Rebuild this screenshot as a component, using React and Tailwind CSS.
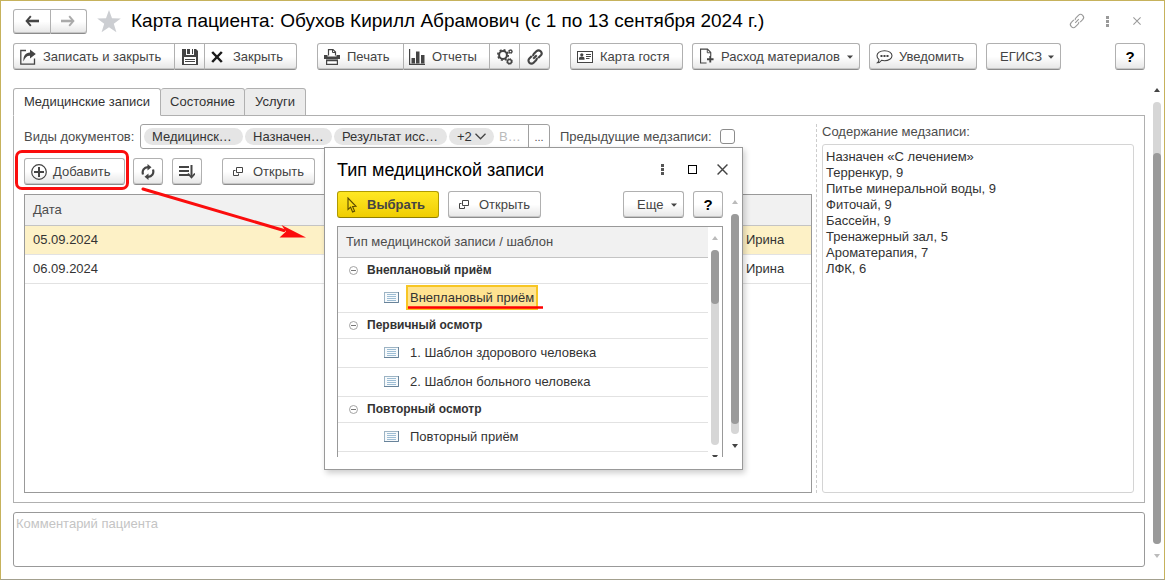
import React from 'react';

const BTN =
  'flex shrink-0 items-center border border-[#b0b0b0] border-b-[#8c8c8c] bg-linear-to-b from-white from-50% to-[#e6e6e6] shadow-[inset_0_-1px_0_#c6c6c6] text-[#444] whitespace-nowrap';

function Button({ className = '', children, ...rest }) {
  return (
    <button type="button" className={`${BTN} h-[27px] ${className}`} {...rest}>
      {children}
    </button>
  );
}

function Caret() {
  return (
    <svg width="6" height="4" viewBox="0 0 6 4" className="ml-auto shrink-0" aria-hidden="true">
      <path d="M0 0.500h6L3 3.800z" fill="#444" />
    </svg>
  );
}

function BackArrow({ flip, color }) {
  return (
    <svg width="14" height="12" viewBox="0 0 14 12" className={flip ? 'rotate-180' : ''} aria-hidden="true">
      <path d="M5.800 1.200L1.600 6l4.200 4.800" fill="none" stroke={color} strokeWidth="1.900" />
      <path d="M2 6h12" stroke={color} strokeWidth="2.600" />
    </svg>
  );
}

function StarIcon() {
  return (
    <svg width="24" height="23" viewBox="0 0 24 23" aria-hidden="true">
      <path d="M12 0l3 8.200 8.800.3-7 5.300 2.600 8.500L12 17.300 4.600 22.300l2.600-8.500-7-5.300L9 8.200z" fill="#ccced2" />
    </svg>
  );
}

function SaveCloseIcon() {
  return (
    <svg width="16" height="16" viewBox="0 0 16 16" aria-hidden="true">
      <path d="M6 1.500H0.800V15.200H14.500V9.500" fill="none" stroke="#444" strokeWidth="1.300" />
      <path d="M3.500 12.500C3 7 5.500 3.500 10 3.500V0.500L15.800 5 10 9.500V6.700C7 6.500 5 8.500 3.500 12.500z" fill="#444" />
    </svg>
  );
}

function FloppyIcon() {
  return (
    <svg width="16" height="16" viewBox="0 0 16 16" aria-hidden="true">
      <path d="M0 0h14l2 2v14H0z" fill="#444" />
      <path d="M4 0h8v6H4z" fill="#fff" />
      <path d="M5 0h3v5H5zM10 0h1v5h-1z" fill="#444" />
      <path d="M2 8h12v7H2z" fill="#fff" />
      <path d="M3 10.500h10M3 12.500h10" stroke="#444" strokeWidth="1" />
    </svg>
  );
}

function CrossIcon() {
  return (
    <svg width="12" height="12" viewBox="0 0 12 12" aria-hidden="true">
      <path d="M1.200 1l9.600 10M10.800 1L1.200 11" stroke="#1a1a1a" strokeWidth="2.500" />
    </svg>
  );
}

function PrinterIcon() {
  return (
    <svg width="16" height="16" viewBox="0 0 16 16" aria-hidden="true">
      <path d="M4.500 6.500V0.600h4.500l2.500 2.500v3.400" fill="#fff" stroke="#444" strokeWidth="1.200" />
      <path d="M8.500 0.500v3h3" fill="none" stroke="#444" strokeWidth="1" />
      <path d="M0 6h3.500v1.500h9V6H16v4H0z" fill="#444" />
      <path d="M2.600 11h10.800v4.400H2.600z" fill="#fff" stroke="#444" strokeWidth="1.200" />
      <path d="M2 11.500h12" stroke="#444" strokeWidth="1.500" />
    </svg>
  );
}

function ChartIcon() {
  return (
    <svg width="16" height="16" viewBox="0 0 16 16" aria-hidden="true">
      <path d="M0.600 0v15.400H16" fill="none" stroke="#444" strokeWidth="1.200" />
      <path d="M2.500 9H6v5.500H2.500zM7 2.500h3.500v12H7zM12 6h3.500v8.500H12z" fill="#444" />
    </svg>
  );
}

function GearsIcon() {
  return (
    <svg width="16" height="16" viewBox="0 0 16 16" aria-hidden="true">
      <circle cx="6" cy="6" r="3.900" fill="none" stroke="#444" strokeWidth="2" />
      <circle cx="6" cy="6" r="5.200" fill="none" stroke="#444" strokeWidth="1.600" strokeDasharray="2 2.080" />
      <circle cx="13.500" cy="2.500" r="1.400" fill="none" stroke="#444" strokeWidth="1.200" />
      <circle cx="13.500" cy="2.500" r="2.200" fill="none" stroke="#444" strokeWidth="0.700" strokeDasharray="0.900 0.830" />
      <circle cx="12.500" cy="12.500" r="2" fill="none" stroke="#444" strokeWidth="1.500" />
      <circle cx="12.500" cy="12.500" r="3" fill="none" stroke="#444" strokeWidth="0.900" strokeDasharray="1.200 1.150" />
    </svg>
  );
}

function ChainIcon({ color, thin }) {
  return (
    <svg width="18" height="18" viewBox="0 0 18 18" aria-hidden="true">
      <g transform="rotate(-45 9 9)" fill="none" stroke={color} strokeWidth={thin ? 1.1 : 2.1}>
        <path d="M7.500 6H4a3 3 0 0 0 0 6h3.500a2.600 2.600 0 0 0 2.200-1.200" />
        <path d="M10.500 12H14a3 3 0 0 0 0-6h-3.500a2.600 2.600 0 0 0-2.200 1.200" />
        <path d="M6.500 9h5" />
      </g>
    </svg>
  );
}

function CardIcon() {
  return (
    <svg width="16" height="12" viewBox="0 0 16 12" aria-hidden="true">
      <rect x="0.500" y="0.500" width="15" height="11" fill="#fff" stroke="#444" />
      <circle cx="4.800" cy="3.800" r="1.600" fill="#444" />
      <path d="M2 8.800V7Q2 5.500 4.800 5.500T7.500 7v1.800z" fill="#444" />
      <path d="M9 3.500h5M9 5.500h5M9 7.500h3.500" stroke="#444" />
    </svg>
  );
}

function DocPlusIcon() {
  return (
    <svg width="15" height="17" viewBox="0 0 15 17" aria-hidden="true">
      <path d="M7 15.500H0.600V0.600H8l3.500 3.500V8" fill="none" stroke="#444" strokeWidth="1.200" />
      <path d="M7.800 0.600V4.500h3.700" fill="none" stroke="#444" />
      <path d="M11 8v7M7.500 11.500h7" stroke="#444" strokeWidth="2" />
    </svg>
  );
}

function BubbleIcon() {
  return (
    <svg width="17" height="14" viewBox="0 0 17 14" aria-hidden="true">
      <path
        d="M8.500 0.700c4.300 0 7.500 2.200 7.500 5s-3.200 5-7.500 5c-1 0-2-.1-2.900-.4C4.600 11.800 3 12.800 1.500 12.800c1-.8 1.500-2.300 1.400-3.400C1.700 8.500 1 7.200 1 5.700c0-2.800 3.200-5 7.500-5z"
        fill="#fff"
        stroke="#444"
        strokeWidth="1.100"
      />
      <path d="M4.500 5h2v2h-2zM7.500 5h2v2h-2zM10.500 5h2v2h-2z" fill="#444" />
    </svg>
  );
}

function PlusCircleIcon() {
  return (
    <svg width="16" height="16" viewBox="0 0 16 16" aria-hidden="true">
      <circle cx="8" cy="8" r="7.300" fill="none" stroke="#444" strokeWidth="1.200" />
      <path d="M8 3v10M3 8h10" stroke="#444" strokeWidth="2" />
    </svg>
  );
}

function RefreshIcon() {
  return (
    <svg width="14" height="16" viewBox="0 0 14 16" aria-hidden="true">
      <path d="M2 10.500C0.800 6.500 3 3.300 7 3.200" fill="none" stroke="#444" strokeWidth="2.200" />
      <path d="M6.500 0l4 3.300-4 3.200z" fill="#444" />
      <path d="M12 5.500c1.200 4-1 7.200-5 7.300" fill="none" stroke="#444" strokeWidth="2.200" />
      <path d="M7.500 16l-4-3.300 4-3.200z" fill="#444" />
    </svg>
  );
}

function SortIcon() {
  return (
    <svg width="16" height="14" viewBox="0 0 16 14" aria-hidden="true">
      <path d="M0 2h10M0 6h10M0 10h10" stroke="#444" strokeWidth="2" />
      <path d="M12.500 0v11" stroke="#444" strokeWidth="2" />
      <path d="M9 8.500l3.500 4 3.500-4" fill="none" stroke="#444" strokeWidth="1.800" />
    </svg>
  );
}

function OpenIcon() {
  return (
    <svg width="10" height="10" viewBox="0 0 10 10" aria-hidden="true">
      <path d="M3.500 0.500h6v5h-6z" fill="none" stroke="#444" />
      <path d="M2.500 3.500h-2v5h5v-2" fill="none" stroke="#444" />
    </svg>
  );
}

function PointerIcon() {
  return (
    <svg width="10" height="16" viewBox="0 0 10 16" aria-hidden="true">
      <path d="M1 1v11.500l2.600-2.300 2 4.800 2-.9-2-4.600 3.400-.2z" fill="none" stroke="#5a4a00" strokeWidth="1.100" />
    </svg>
  );
}

function DotsIcon({ color }) {
  return (
    <svg width="3" height="11" viewBox="0 0 3 11" aria-hidden="true">
      <path d="M0 0h3v3H0zM0 4h3v3H0zM0 8h3v3H0z" fill={color} />
    </svg>
  );
}

function ThinCross({ size, color }) {
  return (
    <svg width={size} height={size} viewBox="0 0 10 10" aria-hidden="true">
      <path d="M0.500 0.500l9 9M9.500 0.500l-9 9" stroke={color} strokeWidth="1.300" />
    </svg>
  );
}

function CollapseIcon() {
  return (
    <svg width="9" height="9" viewBox="0 0 9 9" aria-hidden="true">
      <circle cx="4.500" cy="4.500" r="4" fill="#fff" stroke="#999" strokeWidth="0.900" />
      <path d="M2 4.500h5" stroke="#777" />
    </svg>
  );
}

function FormIcon() {
  return (
    <svg width="15" height="11" viewBox="0 0 15 11" aria-hidden="true">
      <rect x="0.500" y="0.500" width="14" height="10" fill="#f7fafc" stroke="#9db4c4" />
      <path d="M14.500 0v10.500H0" fill="none" stroke="#68839a" />
      <path d="M3 2.500h9M3 4.500h9M3 6.500h9M3 8.500h9" stroke="#9dbdd4" />
    </svg>
  );
}

function ScrollArrow({ down, color }) {
  return (
    <svg width="6" height="4" viewBox="0 0 6 4" className={`shrink-0 ${down ? 'rotate-180' : ''}`} aria-hidden="true">
      <path d="M3 0L6 4H0z" fill={color} />
    </svg>
  );
}

function Chip({ className = '', children }) {
  return (
    <span className={`flex h-[17px] shrink-0 items-center rounded-full bg-[#e5e5e5] pl-2 text-[#333] ${className}`}>
      {children}
    </span>
  );
}

const RECORDS = [
  { date: '05.09.2024', name: 'Ирина', active: true },
  { date: '06.09.2024', name: 'Ирина', active: false },
];

const TEMPLATES = [
  { title: 'Внеплановый приём', group: true },
  { title: 'Внеплановый приём', selected: true },
  { title: 'Первичный осмотр', group: true },
  { title: '1. Шаблон здорового человека' },
  { title: '2. Шаблон больного человека' },
  { title: 'Повторный осмотр', group: true },
  { title: 'Повторный приём' },
];

const SUMMARY = `Назначен «С лечением»
Терренкур, 9
Питье минеральной воды, 9
Фиточай, 9
Бассейн, 9
Тренажерный зал, 5
Ароматерапия, 7
ЛФК, 6`;

function Header() {
  return (
    <header className="flex h-6 items-center">
      <div className="flex w-[74px] shrink-0">
        <button type="button" aria-label="Назад" className={`${BTN} h-[25px] flex-1 justify-center rounded-l-[3px]`}>
          <BackArrow color="#444" />
        </button>
        <button type="button" aria-label="Вперед" className={`${BTN} h-[25px] flex-1 justify-center rounded-r-[3px] border-l-0`}>
          <BackArrow flip color="#aaa" />
        </button>
      </div>
      <button type="button" aria-label="В избранное" className="ml-[10px] shrink-0">
        <StarIcon />
      </button>
      <h1 className="ml-[10px] text-[19px] whitespace-nowrap text-black">
        Карта пациента: Обухов Кирилл Абрамович (с 1 по 13 сентября 2024 г.)
      </h1>
      <div className="ml-auto flex items-center">
        <button type="button" aria-label="Ссылка" className="flex w-[30px] justify-center"><ChainIcon color="#999" thin /></button>
        <button type="button" aria-label="Меню" className="flex w-[30px] justify-center"><DotsIcon color="#999" /></button>
        <button type="button" aria-label="Закрыть окно" className="-mr-[7px] flex w-[30px] justify-center"><ThinCross size={8} color="#999" /></button>
      </div>
    </header>
  );
}

function Toolbar() {
  return (
    <div className="mt-[10px] flex">
      <Button className="w-[162px] gap-[7px] rounded-l-[3px] pl-[6px]"><SaveCloseIcon />Записать и закрыть</Button>
      <Button className="w-[30px] justify-center border-l-0" aria-label="Записать"><FloppyIcon /></Button>
      <Button className="w-[92px] gap-[10px] rounded-r-[3px] border-l-0 pl-[6px]"><CrossIcon />Закрыть</Button>

      <Button className="ml-5 w-[87px] gap-[7px] rounded-l-[3px] pl-[6px]"><PrinterIcon />Печать</Button>
      <Button className="w-[86px] gap-[7px] border-l-0 pl-[5px]"><ChartIcon />Отчеты</Button>
      <Button className="w-[30px] justify-center border-l-0" aria-label="Настройки"><GearsIcon /></Button>
      <Button className="w-[30px] justify-center rounded-r-[3px] border-l-0" aria-label="Ссылки"><ChainIcon color="#444" /></Button>

      <Button className="ml-5 w-[113px] gap-[7px] rounded-[3px] pl-[6px]"><CardIcon />Карта гостя</Button>
      <Button className="ml-[9px] w-[168px] gap-[7px] rounded-[3px] pr-[6px] pl-[7px]"><DocPlusIcon />Расход материалов<Caret /></Button>
      <Button className="ml-[9px] w-[108px] gap-[6px] rounded-[3px] pl-[6px]"><BubbleIcon />Уведомить</Button>
      <Button className="ml-[9px] w-[75px] rounded-[3px] pr-[6px] pl-[13px]">ЕГИСЗ<Caret /></Button>
      <Button className="ml-auto w-[30px] justify-center rounded-[3px] text-[15px] font-bold text-black">?</Button>
    </div>
  );
}

function Tabs() {
  return (
    <div role="tablist" className="relative z-10 mt-[18px] flex h-7 text-[#333]">
      <button type="button" role="tab" aria-selected="true" className="w-[148px] rounded-t-[3px] border border-[#b0b0b0] border-b-white bg-white whitespace-nowrap">
        Медицинские записи
      </button>
      <button type="button" role="tab" aria-selected="false" className="w-[84px] rounded-t-[3px] border border-l-0 border-[#b0b0b0] bg-[#ececec]">
        Состояние
      </button>
      <button type="button" role="tab" aria-selected="false" className="w-[61px] rounded-t-[3px] border border-l-0 border-[#b0b0b0] bg-[#ececec]">
        Услуги
      </button>
    </div>
  );
}

function Filters() {
  return (
    <div className="flex h-[25px] items-center text-[#4c4c4c]">
      <label htmlFor="kinds" className="w-[116px] shrink-0 whitespace-nowrap">Виды документов:</label>
      <div className="flex h-[25px] w-[410px] shrink-0 items-center rounded-[3px] border border-[#a0a0a0] bg-white pl-[3px]">
        <Chip className="w-[99px]">Медицинск…</Chip>
        <Chip className="ml-[2px] w-[87px]">Назначен…</Chip>
        <Chip className="ml-[2px] w-[113px]">Результат исс…</Chip>
        <Chip className="ml-[2px] w-[45px] gap-[3px]">
          +2
          <svg width="11" height="7" viewBox="0 0 11 7" aria-hidden="true">
            <path d="M0.500 0.800l5 5 5-5" fill="none" stroke="#444" strokeWidth="1.300" />
          </svg>
        </Chip>
        <input id="kinds" placeholder="В…" className="ml-[5px] w-0 min-w-0 flex-1 outline-none placeholder:text-[#bbb]" />
        <button type="button" aria-label="Выбрать виды" className="h-full w-[21px] border-l border-[#a0a0a0] text-[11px]">...</button>
      </div>
      <label htmlFor="previous" className="ml-[10px] w-[160px] whitespace-nowrap">Предыдущие медзаписи:</label>
      <input id="previous" type="checkbox" className="size-[15px] shrink-0 appearance-none rounded-[3px] border border-[#8c8c8c] bg-white" />
    </div>
  );
}

function Actions() {
  return (
    <div className="mt-[9px] flex">
      <div className="relative">
        <Button className="w-[101px] gap-[6px] rounded-[3px] pl-[6px]"><PlusCircleIcon />Добавить</Button>
        <div className="pointer-events-none absolute -top-[8px] -right-1 -bottom-[5px] -left-[9px] rounded-[7px] border-3 border-[#fb0d0d]" />
        <svg width="165" height="60" viewBox="0 0 165 60" className="pointer-events-none absolute top-7 left-[117px] z-10" aria-hidden="true">
          <path d="M2 3L143 44.500" stroke="#fb0d0d" strokeWidth="3" strokeLinecap="round" />
          <path d="M165 51.500L138.500 51.500L145 45.500L140.500 39z" fill="#fb0d0d" />
        </svg>
      </div>
      <Button className="ml-2 w-[30px] justify-center rounded-[3px]" aria-label="Обновить"><RefreshIcon /></Button>
      <Button className="ml-[9px] w-[30px] justify-center rounded-[3px]" aria-label="Сортировать"><SortIcon /></Button>
      <Button className="ml-5 w-[93px] gap-[10px] rounded-[3px] pl-[10px]"><OpenIcon />Открыть</Button>
    </div>
  );
}

function Records() {
  return (
    <div className="mt-[9px] flex-1 border border-[#999] bg-white">
      <table className="w-full table-fixed border-collapse text-left text-[#333]">
        <thead>
          <tr className="h-[30px] border-b border-[#c4c4c4] bg-[#f1f1f1] text-[#4c4c4c]">
            <th className="pl-2 font-normal">Дата</th>
            <th className="w-[73px]" aria-label="Врач" />
          </tr>
        </thead>
        <tbody>
          {RECORDS.map((r) => (
            <tr key={r.date} className={`h-[29px] border-b border-[#e2e2e2] ${r.active ? 'bg-[#fdf1c6]' : ''}`}>
              <td className="pl-2">{r.date}</td>
              <td className="pl-2">{r.name}</td>
            </tr>
          ))}
        </tbody>
      </table>
    </div>
  );
}

function TypeDialog() {
  return (
    <section role="dialog" aria-label="Тип медицинской записи" className="absolute top-[146px] left-[323px] z-20 w-[419px] border border-[#999] bg-white pb-3 pl-3 shadow-[2px_3px_6px_rgba(0,0,0,0.2)]">
      <div className="flex h-[43px] items-center pr-[14px]">
        <h2 className="text-[18px] whitespace-nowrap text-black">Тип медицинской записи</h2>
        <button type="button" aria-label="Меню" className="ml-auto"><DotsIcon color="#555" /></button>
        <button type="button" aria-label="Развернуть" className="ml-6 size-[9px] border border-black" />
        <button type="button" aria-label="Закрыть" className="ml-5"><ThinCross size={11} color="#444" /></button>
      </div>
      <div className="flex">
        <div className="w-[386px]">
          <div className="flex">
            <button type="button" className="flex h-[27px] w-[102px] items-center gap-[10px] rounded-[3px] border border-[#b09b00] border-b-[#8f7e00] bg-linear-to-b from-[#ffe822] to-[#f0cd00] pl-[9px] font-bold text-[#444]">
              <PointerIcon />Выбрать
            </button>
            <Button className="ml-[9px] w-[93px] gap-[10px] rounded-[3px] pl-[10px]"><OpenIcon />Открыть</Button>
            <Button className="ml-auto w-[61px] rounded-[3px] pr-[6px] pl-[13px]">Еще<Caret /></Button>
            <Button className="ml-[9px] w-[30px] justify-center rounded-[3px] text-[15px] font-bold text-black">?</Button>
          </div>
          <div className="mt-2 flex h-[231px] overflow-hidden border border-b-0 border-[#999]">
            <div className="flex-1">
              <table className="w-full border-collapse text-left text-[#333]">
                <thead>
                  <tr className="h-[30px] border-b border-[#c4c4c4] bg-[#f1f1f1] text-[#4c4c4c]">
                    <th className="pl-2 font-normal">Тип медицинской записи / шаблон</th>
                  </tr>
                </thead>
                <tbody>
                  {TEMPLATES.map((t, i) =>
                    t.group ? (
                      <tr key={i} className="h-[26px] border-b border-[#e2e2e2]">
                        <td>
                          <div className="flex items-center gap-[9px] pl-[11px] text-[12px] font-bold">
                            <CollapseIcon />{t.title}
                          </div>
                        </td>
                      </tr>
                    ) : (
                      <tr key={i} className="h-[29px] border-b border-[#e2e2e2]">
                        <td>
                          <div className="flex items-center pl-[46px]">
                            <FormIcon />
                            <span className={`relative ml-[7px] border-2 px-[2px] leading-[21px] ${t.selected ? 'border-[#f7c624] bg-[#ffe391]' : 'border-transparent'}`}>
                              {t.title}
                              {t.selected && (
                                <svg width="135" height="3" viewBox="0 0 135 3" className="absolute -bottom-px left-0" aria-hidden="true">
                                  <path d="M0 1.500L135 1.500" stroke="#f00" strokeWidth="2.400" />
                                </svg>
                              )}
                            </span>
                          </div>
                        </td>
                      </tr>
                    ),
                  )}
                </tbody>
              </table>
            </div>
            <div className="flex w-[14px] shrink-0 flex-col items-center pt-[9px]">
              <ScrollArrow color="#bbb" />
              <div className="mt-[10px] h-[195px] w-2 shrink-0 rounded-full bg-[#d6d6d6]">
                <div className="h-[54px] rounded-full bg-[#9a9a9a]" />
              </div>
              <div className="mt-[10px] flex"><ScrollArrow down color="#444" /></div>
            </div>
          </div>
        </div>
        <div className="flex flex-1 flex-col items-center pt-[9px] pl-1">
          <ScrollArrow color="#bbb" />
          <div className="mt-[10px] h-[220px] w-2 rounded-full bg-[#d6d6d6]">
            <div className="h-[210px] rounded-full bg-[#9a9a9a]" />
          </div>
          <div className="mt-[10px] flex"><ScrollArrow down color="#444" /></div>
        </div>
      </div>
    </section>
  );
}

export default function App() {
  return (
    <div className="relative flex min-h-screen border border-[#c6b25c] border-b-[#a3a08e] bg-white font-['Liberation_Sans',Arial,sans-serif] text-[13px] leading-4">
      <main className="flex min-w-0 flex-1 flex-col pt-2 pb-3 pl-3">
        <Header />
        <Toolbar />
        <Tabs />
        <div role="tabpanel" className="-mt-px flex flex-1 border border-[#b0b0b0] pt-2 pr-[10px] pb-[9px] pl-[10px]">
          <div className="flex min-w-0 flex-1 flex-col">
            <Filters />
            <Actions />
            <Records />
          </div>
          <div className="mr-[5px] ml-1 border-l border-dashed border-[#ccc]" />
          <div className="flex w-[312px] shrink-0 flex-col">
            <label htmlFor="summary" className="h-5 text-[#4c4c4c]">Содержание медзаписи:</label>
            <textarea id="summary" readOnly value={SUMMARY} className="flex-1 resize-none rounded-[3px] border border-[#d4d4d4] px-[3px] py-1 text-[#333] outline-none" />
          </div>
        </div>
        <textarea aria-label="Комментарий пациента" placeholder="Комментарий пациента" className="mt-[9px] h-[55px] resize-none rounded-[3px] border border-[#999] px-[2px] py-[3px] outline-none placeholder:text-[#c4c4c4]" />
      </main>
      <div className="flex w-[19px] shrink-0 flex-col items-center pt-[87px] pb-[21px] pl-[5px]">
        <ScrollArrow color="#444" />
        <div className="mt-[10px] flex w-2 flex-1 flex-col rounded-full bg-[#d6d6d6] pt-[51px]">
          <div className="flex-1 rounded-full bg-[#9a9a9a]" />
        </div>
        <div className="mt-[10px] flex"><ScrollArrow down color="#bbb" /></div>
      </div>
      <TypeDialog />
    </div>
  );
}
